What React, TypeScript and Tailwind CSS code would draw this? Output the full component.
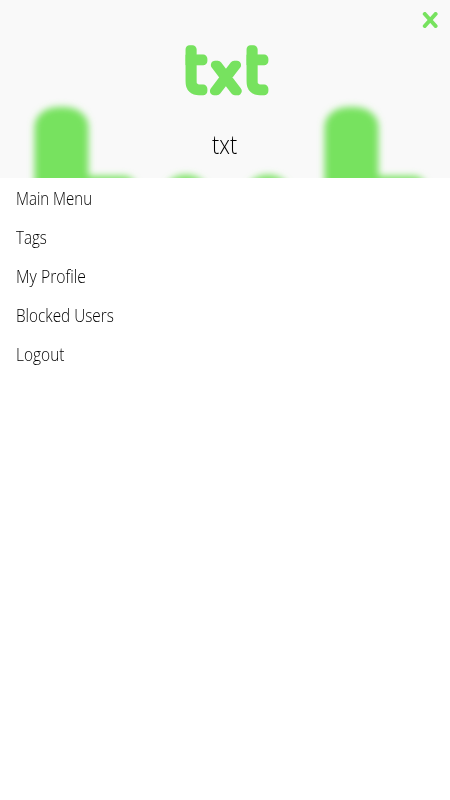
import { FC } from 'react';

const MENU_ITEMS: { label: string; fit: string }[] = [
  { label: 'Main Menu', fit: 'scale-x-[0.835]' },
  { label: 'Tags', fit: 'scale-x-[0.84]' },
  { label: 'My Profile', fit: 'scale-x-[0.875]' },
  { label: 'Blocked Users', fit: 'scale-x-[0.85]' },
  { label: 'Logout', fit: 'scale-x-[0.86]' },
];

const Logo: FC = () => (
  <svg
    width="84"
    height="50"
    viewBox="0 0 84 50"
    className="block overflow-visible fill-[#77e25f] stroke-[#77e25f] [font-family:'DejaVu_Sans',sans-serif]"
    strokeWidth="8.6"
    strokeLinejoin="round"
  >
    <defs>
      <clipPath id="stem-left">
        <rect x="0.3" y="-2" width="24" height="54" />
      </clipPath>
      <clipPath id="stem-right">
        <rect x="61.3" y="-2" width="24" height="54" />
      </clipPath>
    </defs>
    <g clipPath="url(#stem-left)">
      <text x="-2.1" y="44.8" fontSize="58">
        t
      </text>
    </g>
    <text x="26.4" y="44.8" fontSize="48.5">
      x
    </text>
    <g clipPath="url(#stem-right)">
      <text x="58.9" y="44.8" fontSize="58">
        t
      </text>
    </g>
  </svg>
);

// Oversized, out of focus shapes behind the header
const Backdrop: FC = () => (
  <svg
    width="450"
    height="178"
    viewBox="0 0 450 178"
    className="absolute inset-0 fill-[#77e25f]"
    aria-hidden="true"
  >
    <defs>
      <filter id="soft" x="-10%" y="-20%" width="120%" height="140%">
        <feGaussianBlur stdDeviation="3.5" />
      </filter>
    </defs>
    <g filter="url(#soft)">
      <rect x="34.5" y="107" width="54" height="110" rx="24" ry="20" />
      <rect x="60" y="176" width="77" height="40" rx="14" />
      <ellipse cx="186" cy="193" rx="22" ry="18" />
      <ellipse cx="268" cy="193" rx="22" ry="18" />
      <rect x="324.5" y="107" width="54" height="110" rx="24" ry="20" />
      <rect x="350" y="176" width="77" height="40" rx="14" />
    </g>
  </svg>
);

const CloseButton: FC = () => (
  <button type="button" aria-label="Close" className="absolute right-3 top-3">
    <svg
      width="16"
      height="16"
      viewBox="0 0 16 16"
      className="block stroke-[#77e25f]"
      strokeWidth="4"
      strokeLinecap="round"
    >
      <path d="M2.8 2 13.6 14M13.6 2 2.8 14" />
    </svg>
  </button>
);

export default function App() {
  return (
    <div className="min-h-screen w-full bg-white font-light text-black [font-family:'Open_Sans',sans-serif]">
      <header className="relative h-[178px] overflow-hidden bg-[#f9f9f9]">
        <Backdrop />
        <div className="relative flex flex-col items-center pt-[46px]">
          <div className="pl-[3px]">
            <Logo />
          </div>
          <h1 className="mt-[32px] text-[25px] leading-[32px] scale-x-[0.86]">
            txt
          </h1>
        </div>
        <CloseButton />
      </header>
      <nav>
        <ul>
          {MENU_ITEMS.map((item) => (
            <li key={item.label} className="h-[39px] pl-4 leading-[40px]">
              <a
                className={`inline-block origin-left whitespace-nowrap text-[18px] ${item.fit}`}
              >
                {item.label}
              </a>
            </li>
          ))}
        </ul>
      </nav>
    </div>
  );
}
